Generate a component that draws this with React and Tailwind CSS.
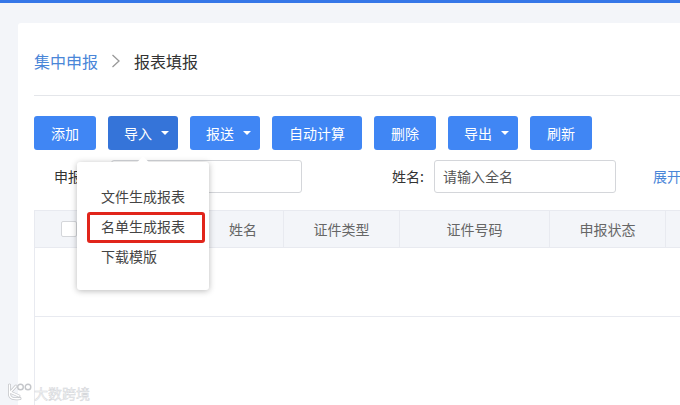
const font = { fontFamily: '"Noto Sans CJK SC", "Liberation Sans", sans-serif' };

function Caret() {
  return <span className="ml-[9px] w-0 h-0 border-x-[4px] border-x-transparent border-t-[4px] border-t-white" />;
}

function Btn({ w, label, caret, active }) {
  return (
    <button className={`${w} ${active ? "bg-[#3574d9]" : "bg-[#4086f4]"} ${caret ? "pl-[7px]" : ""} h-[34px] rounded-[3px] text-white text-[14px] flex items-center justify-center shrink-0`}>
      {label}
      {caret && <Caret />}
    </button>
  );
}

function Th({ w, label }) {
  return (
    <div className={`${w} h-full border-r border-[#e8eaf0] flex items-center justify-center text-[14px] text-[#666] shrink-0`}>
      {label}
    </div>
  );
}

export default function App() {
  return (
    <div className="w-[680px] h-[405px] overflow-hidden relative bg-[#f3f5f9]" style={font}>
      <div className="h-[3px] bg-[#3577e8]" />
      <div className="ml-[18px] mt-[20px] h-[382px] bg-white rounded-tl-[3px] pl-4">
        <div className="h-[73px] border-b border-[#e4e6ea] flex items-center pt-[5px] pb-[1px] text-[16px] leading-none">
          <span className="text-[#4a86d8] w-[64px]">集中申报</span>
          <svg className="ml-[13px] w-[10px] h-[14px]" viewBox="0 0 10 14" fill="none" stroke="#999" strokeWidth="1.3">
            <path d="M1.5 1 L8 7 L1.5 13" />
          </svg>
          <span className="ml-[13px] text-[#333]">报表填报</span>
        </div>

        <div className="mt-[20px] flex gap-3">
          <Btn w="w-[62px]" label="添加" />
          <Btn w="w-[70px]" label="导入" caret active />
          <Btn w="w-[70px]" label="报送" caret />
          <Btn w="w-[90px]" label="自动计算" />
          <Btn w="w-[62px]" label="删除" />
          <Btn w="w-[70px]" label="导出" caret />
          <Btn w="w-[62px]" label="刷新" />
        </div>

        <div className="mt-[10px] h-[33px] flex items-center text-[14px] text-[#333] whitespace-nowrap">
          <span className="ml-[20px] w-[57px] shrink-0">申报</span>
          <div className="w-[191px] h-full border border-[#d4d6da] rounded-[3px] shrink-0" />
          <span className="ml-[90px] w-[42px] shrink-0">姓名:</span>
          <div className="w-[182px] h-full border border-[#d4d6da] rounded-[3px] flex items-center pl-2 text-[#555] shrink-0">请输入全名</div>
          <span className="ml-[37px] text-[#4a86d8] shrink-0">展开</span>
        </div>

        <div className="mt-[17px] border-l border-[#e8eaf0] h-[200px] whitespace-nowrap">
          <div className="h-[38px] bg-[#f3f5f9] border-y border-[#e8eaf0] flex items-center">
            <div className="w-[168px] h-full flex items-center pl-[26px] shrink-0">
              <span className="w-4 h-4 bg-white border border-[#d4d6da] rounded-[2px]" />
            </div>
            <Th w="w-[81px]" label="姓名" />
            <Th w="w-[116px]" label="证件类型" />
            <Th w="w-[150px]" label="证件号码" />
            <Th w="w-[116px]" label="申报状态" />
          </div>
          <div className="h-[69px] border-b border-[#e8eaf0]" />
        </div>
      </div>

      <div className="absolute left-[77px] top-[162px] w-[132px] h-[128px] bg-white rounded-[3px] shadow-[0_1px_6px_rgba(0,0,0,0.28)] pt-[20px] pl-[10px] pr-1 text-[14px] text-[#444]">
        <div className="absolute left-[62px] -top-[4px] w-2 h-2 rotate-45 bg-white" />
        <div className="h-[30px] pl-[14px] pb-[2px] flex items-center">文件生成报表</div>
        <div className="h-[31px] w-[118px] pl-[11px] pb-[2px] flex items-center border-[3px] border-[#e1251b] rounded-[3px]">名单生成报表</div>
        <div className="h-[28px] pl-[14px] pb-[2px] flex items-center">下载模版</div>
      </div>

      <div className="absolute left-[7px] top-[383px] flex items-center text-[14px] text-[#f4f5f6] leading-none [-webkit-text-stroke:0.4px_#d0d2d6]">
        <svg className="w-[26px] h-[18px]" viewBox="0 0 26 18" fill="none" strokeLinecap="round">
          <path d="M2.5 2 V11 C2.5 15 6 16.5 13 15.5 M3 9.5 L9 3 M4 9.5 L12 13" stroke="#c4c6ca" strokeWidth="3" />
          <path d="M2.5 2 V11 C2.5 15 6 16.5 13 15.5 M3 9.5 L9 3 M4 9.5 L12 13" stroke="#ffffff" strokeWidth="1.4" />
          <circle cx="13.5" cy="4" r="2.8" stroke="#c4c6ca" strokeWidth="1.4" />
          <circle cx="21" cy="4" r="2.8" stroke="#c4c6ca" strokeWidth="1.4" />
        </svg>
        <span className="ml-[1px] mt-[2px]">大数跨境</span>
      </div>
    </div>
  );
}
